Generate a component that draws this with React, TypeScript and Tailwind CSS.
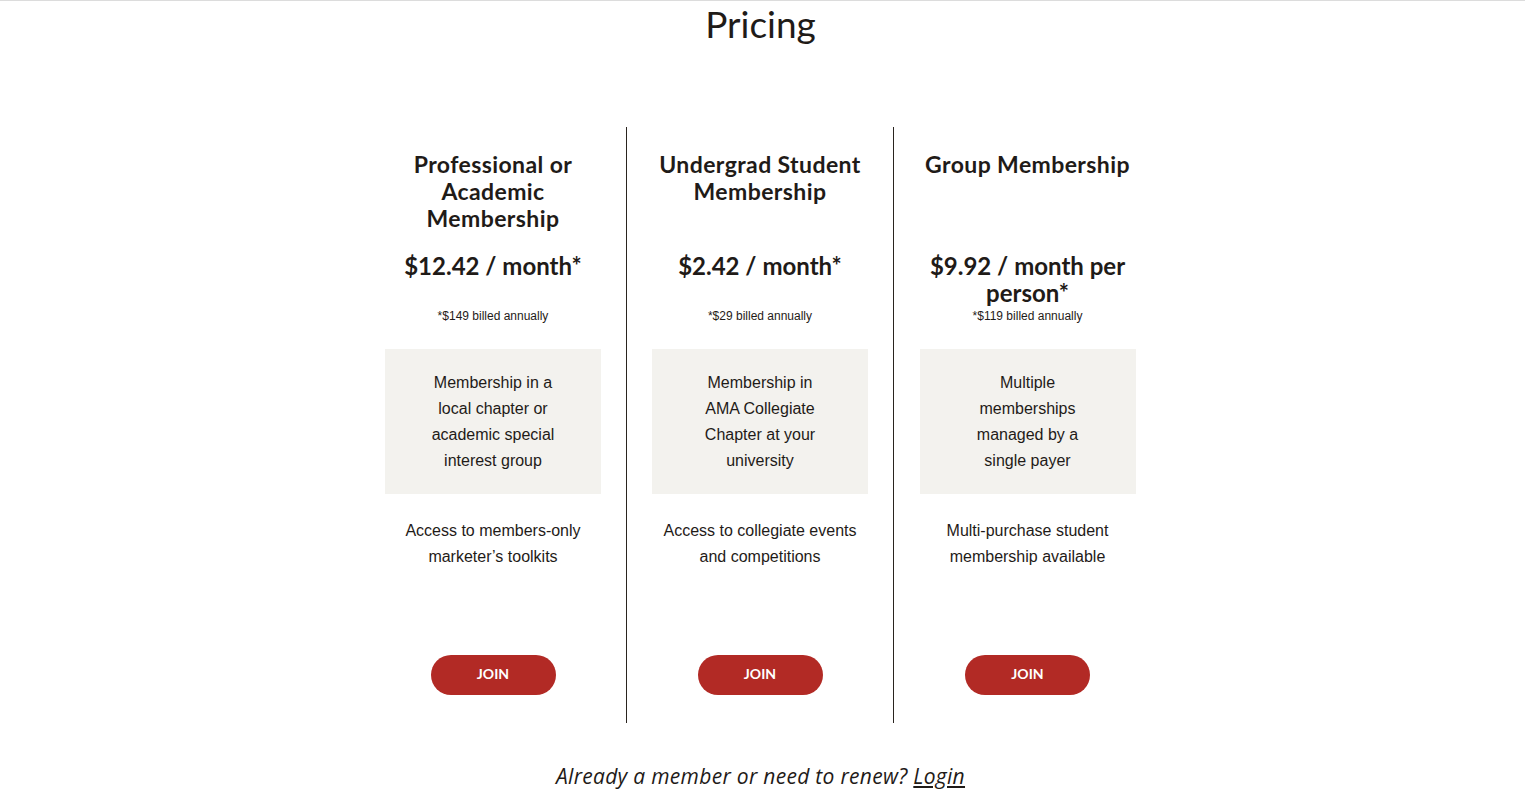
const plans = [
  {
    title: "Professional or Academic Membership",
    price: "$12.42 / month*",
    billed: "*$149 billed annually",
    box: "Membership in a local chapter or academic special interest group",
    perk: "Access to members-only marketer’s toolkits",
  },
  {
    title: "Undergrad Student Membership",
    price: "$2.42 / month*",
    billed: "*$29 billed annually",
    box: "Membership in AMA Collegiate Chapter at your university",
    perk: "Access to collegiate events and competitions",
  },
  {
    title: "Group Membership",
    price: "$9.92 / month per person*",
    billed: "*$119 billed annually",
    box: "Multiple memberships managed by a single payer",
    perk: "Multi-purchase student membership available",
  },
];

function PlanCard({ plan, divider }: { plan: (typeof plans)[number]; divider: boolean }) {
  return (
    <div
      className={`w-[267px] h-[596px] flex flex-col items-center px-[25px] pt-[24px] pb-[28px] text-center ${
        divider ? "border-r border-[#2a241f]" : ""
      }`}
    >
      <h3 className="h-[81px] mb-5 text-[23px] leading-[27px] tracking-[0.4px] font-bold font-['Lato',sans-serif] text-[#1f1b18]">
        {plan.title}
      </h3>
      <p className="min-h-[54px] text-[24px] leading-[27px] font-bold font-['Lato',sans-serif] text-[#1f1b18]">
        {plan.price}
      </p>
      <p className="mt-[3px] text-[12px] leading-[14px] font-['Liberation_Sans',Arial,sans-serif] text-[#1f1b18]">
        {plan.billed}
      </p>
      <div className="mt-[26px] w-[216px] h-[145px] bg-[#f3f2ee] px-10 flex items-center justify-center">
        <p className="text-[16px] leading-[26px] font-['Liberation_Sans',Arial,sans-serif] text-[#1f1b18]">
          {plan.box}
        </p>
      </div>
      <p className="mt-[24px] w-[216px] text-[16px] leading-[26px] font-['Liberation_Sans',Arial,sans-serif] text-[#1f1b18]">
        {plan.perk}
      </p>
      <button className="mt-auto w-[125px] h-10 pb-[3px] rounded-full bg-[#b22a25] text-white text-[14px] font-bold font-['Lato',sans-serif]">
        JOIN
      </button>
    </div>
  );
}

export default function App() {
  return (
    <div className="min-h-screen bg-white border-t border-[#dcdcdc] pr-[4px] flex flex-col items-center">
      <h1 className="mt-px text-[37px] leading-[44px] font-normal font-['Lato',sans-serif] text-[#1f1b18]">
        Pricing
      </h1>
      <div className="mt-[81px] flex">
        {plans.map((p, i) => (
          <PlanCard key={p.title} plan={p} divider={i < plans.length - 1} />
        ))}
      </div>
      <p className="mt-[39px] text-[21px] leading-[28px] tracking-[0.3px] italic font-['Open_Sans',sans-serif] text-[#1f1b18]">
        Already a member or need to renew?{" "}
        <a href="#" className="underline">
          Login
        </a>
      </p>
    </div>
  );
}
